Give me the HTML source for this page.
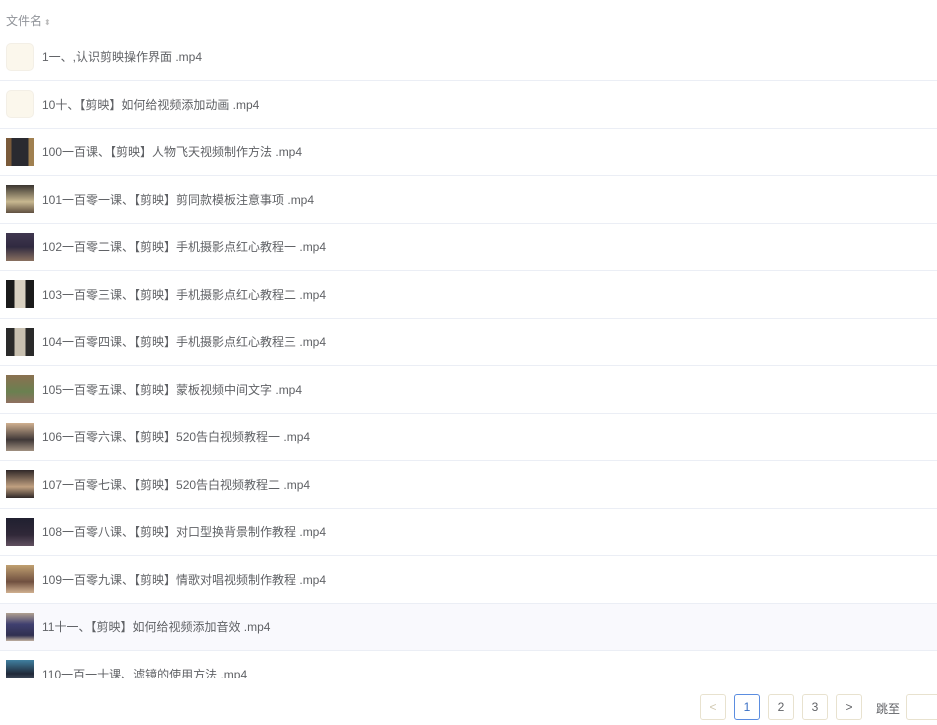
<!DOCTYPE html>
<html><head><meta charset="utf-8">
<style>
body{margin:0;width:937px;height:725px;overflow:hidden;background:#fff;font-family:"Liberation Sans","Noto Sans CJK SC",sans-serif;}
.hd{position:absolute;left:6px;top:12px;font-size:12px;color:#909399;}
.hd span{font-size:8px;color:#bbb;margin-left:2px}
.list{position:absolute;left:0;top:33.5px;width:937px;height:644px;overflow:hidden;}
.row{height:46.5px;border-bottom:1px solid #ebeef5;display:flex;align-items:center;font-size:12px;color:#606266;}
.row.hl{background:#f9f9fd}
.th{width:28px;height:28px;margin-left:6px;margin-right:8px;flex:none;}
.ph{background:#fbf7ec;border-radius:5px;border:1px solid #f3efe6;box-sizing:border-box}
.b{position:absolute;top:694px;width:24px;height:24px;border:1px solid #e8e2cf;border-radius:3px;font-size:12px;color:#606266;text-align:center;line-height:24px;background:#fff}
</style></head><body>
<div class="hd">文件名<span>⬍</span></div>
<div class="list">
<div class="row"><div class="th ph"></div>1一、,认识剪映操作界面 .mp4</div>
<div class="row"><div class="th ph"></div>10十、【剪映】如何给视频添加动画 .mp4</div>
<div class="row"><div class="th" style="background:linear-gradient(90deg,#7a5a3a 0 20%,#2a2a30 20% 80%,#a08050 80%)"></div>100一百课、【剪映】人物飞天视频制作方法 .mp4</div>
<div class="row"><div class="th" style="background:linear-gradient(#3a3530,#c8b890 60%,#605040)"></div>101一百零一课、【剪映】剪同款模板注意事项 .mp4</div>
<div class="row"><div class="th" style="background:linear-gradient(#403850,#302a40 50%,#8a7060)"></div>102一百零二课、【剪映】手机摄影点红心教程一 .mp4</div>
<div class="row"><div class="th" style="background:linear-gradient(90deg,#1a1a1a 0 30%,#d8d0c0 30% 70%,#1a1a1a 70%)"></div>103一百零三课、【剪映】手机摄影点红心教程二 .mp4</div>
<div class="row"><div class="th" style="background:linear-gradient(90deg,#2a2a2a 0 30%,#c8c0b0 30% 70%,#2a2a2a 70%)"></div>104一百零四课、【剪映】手机摄影点红心教程三 .mp4</div>
<div class="row"><div class="th" style="background:linear-gradient(#8a7050,#6a8050 60%,#907060)"></div>105一百零五课、【剪映】蒙板视频中间文字 .mp4</div>
<div class="row"><div class="th" style="background:linear-gradient(#d0b090,#403838 60%,#a09080)"></div>106一百零六课、【剪映】520告白视频教程一 .mp4</div>
<div class="row"><div class="th" style="background:linear-gradient(#302828,#c0a080 60%,#302828)"></div>107一百零七课、【剪映】520告白视频教程二 .mp4</div>
<div class="row"><div class="th" style="background:linear-gradient(#202030,#302838 60%,#605060)"></div>108一百零八课、【剪映】对口型换背景制作教程 .mp4</div>
<div class="row"><div class="th" style="background:linear-gradient(#c0a070,#705040 60%,#d0b090)"></div>109一百零九课、【剪映】情歌对唱视频制作教程 .mp4</div>
<div class="row hl"><div class="th" style="background:linear-gradient(#b0a090,#404070 40%,#303050 80%,#c0b0a0)"></div>11十一、【剪映】如何给视频添加音效 .mp4</div>
<div class="row"><div class="th" style="background:linear-gradient(#4080a0,#202838 50%,#8090a0)"></div>110一百一十课、滤镜的使用方法 .mp4</div>
</div>
<div class="b" style="left:700px;color:#d0c8b0">&lt;</div>
<div class="b" style="left:734px;border-color:#5b8de0;color:#3a6fc4">1</div>
<div class="b" style="left:768px">2</div>
<div class="b" style="left:802px">3</div>
<div class="b" style="left:836px">&gt;</div>
<div style="position:absolute;left:876px;top:700px;font-size:12px;color:#606266">跳至</div>
<div class="b" style="left:906px;width:40px"></div>
</body></html>
